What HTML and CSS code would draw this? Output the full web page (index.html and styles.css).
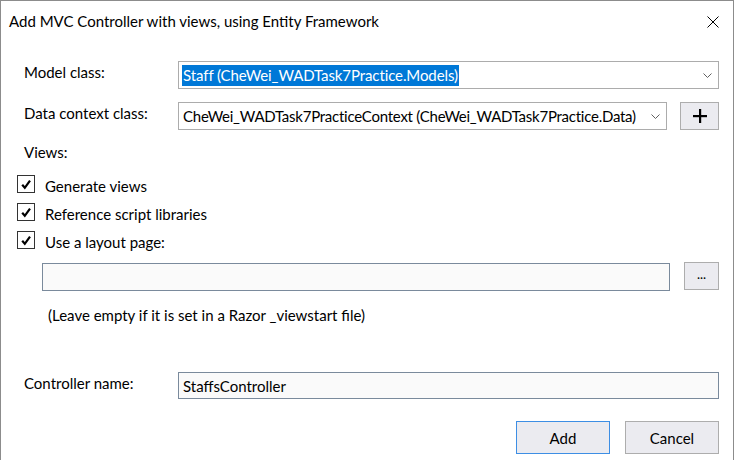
FILE: index.html
```html
<!DOCTYPE html>
<html>
<head>
<meta charset="utf-8">
<link rel="stylesheet" href="styles.css">
</head>
<body>
<div class="dialog">
  <div class="titlebar">
    <span class="title">Add MVC Controller with views, using Entity Framework</span>
    <svg class="close" width="12" height="12" viewBox="0 0 12 12"><path d="M0.5 0.5 L11.5 11.5 M11.5 0.5 L0.5 11.5" stroke="#000" stroke-width="1" fill="none"/></svg>
  </div>
  <div class="content">
    <div class="row row-model">
      <div class="label">Model class:</div>
      <div class="combo">
        <span class="sel">Staff (CheWei_WADTask7Practice.Models)</span>
        <svg class="chev" width="9" height="5" viewBox="0 0 9 5"><path d="M0.5 0.5 L4.5 4.5 L8.5 0.5" stroke="#606060" fill="none"/></svg>
      </div>
    </div>
    <div class="row row-ctx">
      <div class="label">Data context class:</div>
      <div class="combo">
        <span class="val">CheWei_WADTask7PracticeContext (CheWei_WADTask7Practice.Data)</span>
        <svg class="chev" width="9" height="5" viewBox="0 0 9 5"><path d="M0.5 0.5 L4.5 4.5 L8.5 0.5" stroke="#606060" fill="none"/></svg>
      </div>
      <div class="btn btn-plus"><svg width="14" height="14" viewBox="0 0 14 14"><rect x="6" y="0" width="2.2" height="14" fill="#000"/><rect x="0" y="6" width="14" height="2.2" fill="#000"/></svg></div>
    </div>
    <div class="views">Views:</div>
    <div class="checks">
      <div class="check"><span class="box"><svg width="12" height="11" viewBox="0 0 12 11"><path d="M2.2 5.8 L4.8 8.8 L10 1.6" stroke="#000" stroke-width="2.2" fill="none"/></svg></span><span>Generate views</span></div>
      <div class="check"><span class="box"><svg width="12" height="11" viewBox="0 0 12 11"><path d="M2.2 5.8 L4.8 8.8 L10 1.6" stroke="#000" stroke-width="2.2" fill="none"/></svg></span><span>Reference script libraries</span></div>
      <div class="check"><span class="box"><svg width="12" height="11" viewBox="0 0 12 11"><path d="M2.2 5.8 L4.8 8.8 L10 1.6" stroke="#000" stroke-width="2.2" fill="none"/></svg></span><span>Use a layout page:</span></div>
    </div>
    <div class="layout-row">
      <div class="input input-layout"></div>
      <div class="btn btn-dots">...</div>
    </div>
    <div class="hint">(Leave empty if it is set in a Razor _viewstart file)</div>
    <div class="row row-ctrl">
      <div class="label">Controller name:</div>
      <div class="input input-ctrl">StaffsController</div>
    </div>
    <div class="actions">
      <div class="btn btn-action btn-default">Add</div>
      <div class="btn btn-action">Cancel</div>
    </div>
  </div>
</div>
</body>
</html>
```

FILE: styles.css
```css
html, body {
  margin: 0;
  padding: 0;
  background: #ffffff;
}
body {
  font-family: Lato, "Noto Sans", sans-serif;
  font-size: 15px;
  line-height: 20px;
  color: #000;
}
.dialog {
  width: 734px;
  height: 460px;
  box-sizing: border-box;
  border: 1px solid #8c8c8c;
  border-bottom: none;
  background: #fff;
  display: flex;
  flex-direction: column;
}
.titlebar {
  height: 40px;
  display: flex;
  align-items: center;
  justify-content: space-between;
  padding: 0 14px 0 8px;
  flex: none;
}
.close {
  display: block;
  margin-top: 2px;
}
.content {
  padding: 0 14px 0 16px;
  display: flex;
  flex-direction: column;
}
.row {
  display: flex;
  align-items: flex-start;
  padding-left: 7px;
}
.label {
  width: 154px;
  flex: none;
  padding-top: 1px;
}
.row-model {
  margin-top: 20px;
}
.row-ctx {
  margin-top: 13px;
}
.combo {
  flex: 1;
  height: 28px;
  box-sizing: border-box;
  border: 1px solid #acacac;
  background: #fff;
  display: flex;
  align-items: center;
  padding: 0 6px 0 3px;
  white-space: nowrap;
  overflow: hidden;
}
.combo .sel {
  background: #0078d7;
  color: #fff;
  line-height: 21px;
  padding: 0 1px;
  letter-spacing: -0.1px;
}
.combo .val {
  padding-left: 1px;
  letter-spacing: -0.25px;
}
.chev {
  margin-left: auto;
  flex: none;
}
.btn {
  box-sizing: border-box;
  border: 1px solid #adadad;
  background: #ebebf0;
  display: flex;
  align-items: center;
  justify-content: center;
  flex: none;
}
.btn-plus {
  width: 39px;
  height: 28px;
  margin-left: 13px;
}
.views {
  margin-top: 12px;
  padding-left: 7px;
}
.checks {
  margin-top: 13px;
  display: flex;
  flex-direction: column;
}
.check {
  height: 28px;
  display: flex;
  align-items: flex-start;
  gap: 10px;
}
.check span:last-child {
  padding-top: 1px;
}
.box {
  width: 18px;
  height: 18px;
  box-sizing: border-box;
  border: 1px solid #333;
  background: #fff;
  display: flex;
  align-items: center;
  justify-content: center;
}
.layout-row {
  margin-top: 3px;
  padding-left: 25px;
  display: flex;
  align-items: flex-start;
}
.input {
  box-sizing: border-box;
  border: 1px solid #7a8a9c;
  background: #fafafa;
}
.input-layout {
  flex: 1;
  height: 28px;
  margin-top: 1px;
}
.btn-dots {
  width: 35px;
  height: 28px;
  margin-left: 14px;
  font-size: 13px;
  padding-bottom: 4px;
}
.hint {
  margin-top: 14px;
  padding-left: 31px;
}
.row-ctrl {
  margin-top: 47px;
}
.input-ctrl {
  flex: 1;
  height: 27px;
  padding-left: 4px;
  display: flex;
  align-items: center;
}
.actions {
  margin-top: 22px;
  display: flex;
  justify-content: flex-end;
  gap: 15px;
}
.btn-action {
  width: 94px;
  height: 33px;
}
.btn-default {
  border-color: #3d8ee4;
}
```
